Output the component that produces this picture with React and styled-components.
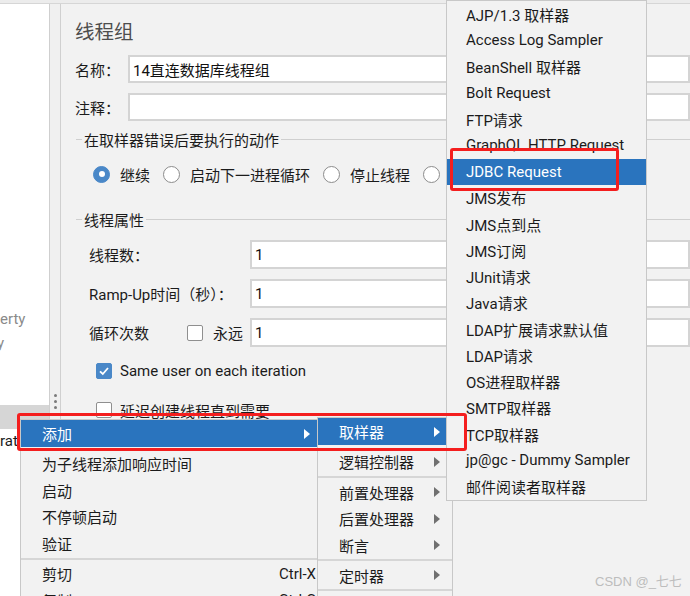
import React from "react";
import styled, { createGlobalStyle } from "styled-components";

const GlobalStyle = createGlobalStyle`
  html, body {
    margin: 0;
    padding: 0;
    background: #f2f2f2;
  }
  body {
    font-family: Roboto, "Noto Sans CJK SC", sans-serif;
    font-size: 15px;
    color: #1b1b1b;
  }
`

const Screen = styled.div`
  position: relative;
  width: 690px;
  height: 596px;
  overflow: hidden;
  background: #f2f2f2;
  display: flex;
  flex-direction: column;
`

const TopStrip = styled.div`
  flex: none;
  height: 3px;
  background: #ececec;
  border-bottom: 1px solid #d6d6d6;
`

const Body = styled.div`
  flex: 1;
  display: flex;
  min-height: 0;
`

const Tree = styled.div`
  flex: none;
  width: 49px;
  background: #fff;
  border-right: 1px solid #cfcfcf;
  padding-top: 302.75px;
`

const TreeRow = styled.div`
  height: 24.5px;
  line-height: 24.5px;
  white-space: nowrap;
  overflow: hidden;
  color: ${p => (p.$muted ? "#8a8a8a" : "#1b1b1b")};
  background: ${p => (p.$selected ? "#d6d6d6" : "transparent")};
  text-indent: ${p => p.$shift || 0}px;
`

const Splitter = styled.div`
  flex: none;
  width: 10px;
  background: #f0f0f0;
  border-right: 1px solid #d0d0d0;
  display: flex;
  flex-direction: column;
  align-items: center;
  gap: 3px;
  padding-top: 390px;
`

const Dot = styled.span`
  width: 3px;
  height: 3px;
  border-radius: 50%;
  background: #7a7a7a;
`

const Main = styled.div`
  flex: 1;
  min-width: 0;
  padding: 17px 0 0 14px;
`

const Title = styled.div`
  height: 24px;
  line-height: 24px;
  font-size: 19.5px;
  color: #4d4d4d;
`

const FieldRow = styled.div`
  display: flex;
  align-items: center;
  height: 28px;
  margin-top: 10px;
`

const FieldLabel = styled.span`
  flex: none;
  width: 53px;
`

const TextBox = styled.input`
  flex: 1;
  min-width: 0;
  height: ${p => p.$h || 28}px;
  box-sizing: border-box;
  border: 2px solid #d4d4d4;
  background: #fff;
  padding: 0 0 0 3px;
  font: inherit;
  color: #111;
  outline: none;
`

const Legend = styled.div`
  display: flex;
  align-items: center;
  height: 20px;
  margin-top: ${p => p.$mt}px;
  padding-left: 1px;

  &::before {
    content: "";
    width: 6px;
    height: 1px;
    background: #cfcfcf;
  }
  &::after {
    content: "";
    flex: 1;
    height: 1px;
    background: #cfcfcf;
  }
  span {
    padding: 0 2px;
  }
`

const RadioRow = styled.div`
  display: flex;
  align-items: center;
  height: 20px;
  margin-top: 15px;
  padding-left: 18px;
  white-space: nowrap;
`

const Radio = styled.span`
  flex: none;
  width: 17px;
  height: 17px;
  box-sizing: border-box;
  border-radius: 50%;
  border: 1.5px solid ${p => (p.$on ? "#4a88c8" : "#8c8c8c")};
  background: ${p => (p.$on ? "#4a88c8" : "#fff")};
  margin-right: 10px;
  display: flex;
  align-items: center;
  justify-content: center;

  &::after {
    content: "";
    display: ${p => (p.$on ? "block" : "none")};
    width: 6px;
    height: 6px;
    border-radius: 50%;
    background: #fff;
  }
`

const RadioText = styled.span`
  margin-right: 13px;
`

const PropRow = styled.div`
  display: flex;
  align-items: center;
  height: 29px;
  margin-top: ${p => p.$mt}px;
  padding-left: 14px;
`

const PropLabel = styled.div`
  flex: none;
  width: 161px;
  display: flex;
  align-items: center;
  white-space: nowrap;
`

const LoopText = styled.span`
  width: 98px;
`

const CheckRow = styled.div`
  display: flex;
  align-items: center;
  height: 20px;
  margin-top: ${p => p.$mt}px;
  padding-left: 21px;
  white-space: nowrap;
`

const Box = styled.span`
  flex: none;
  width: 16px;
  height: 16px;
  box-sizing: border-box;
  border-radius: 2px;
  border: 1px solid ${p => (p.$on ? "#4a88c8" : "#8f8f8f")};
  background: ${p => (p.$on ? "#4a88c8" : "#fff")};
  margin-right: ${p => p.$mr ?? 8}px;
  display: flex;
  align-items: center;
  justify-content: center;
`

const Menu = styled.div`
  position: absolute;
  left: ${p => p.$left}px;
  top: ${p => p.$top}px;
  width: ${p => p.$width}px;
  background: #f2f2f2;
  border: 1px solid #c8c8c8;
  z-index: ${p => p.$z};
`

const Item = styled.div`
  display: flex;
  align-items: center;
  height: ${p => p.$h || 26.5}px;
  padding-left: ${p => p.$pad}px;
  white-space: nowrap;
  background: ${p => (p.$active ? "#2a74be" : "transparent")};
  color: ${p => (p.$active ? "#fff" : "#1b1b1b")};
  margin-bottom: ${p => p.$gap || 0}px;

  span:first-child {
    flex: 1;
  }
`

const Shortcut = styled.span`
  margin-right: 6px;
`

const Arrow = styled.span`
  width: 0;
  height: 0;
  margin-right: 12px;
  border-top: 5px solid transparent;
  border-bottom: 5px solid transparent;
  border-left: 6px solid ${p => (p.$light ? "#fff" : "#707070")};
`

const Separator = styled.div`
  height: 4px;
  display: flex;
  align-items: center;

  &::after {
    content: "";
    flex: 1;
    height: 2px;
    background: #d6d6d6;
  }
`

const Callout = styled.div`
  position: absolute;
  left: ${p => p.$left}px;
  top: ${p => p.$top}px;
  width: ${p => p.$width}px;
  height: ${p => p.$height}px;
  box-sizing: border-box;
  border: 3px solid #f41e1e;
  border-radius: 3px;
  z-index: 10;
`

const Watermark = styled.div`
  position: absolute;
  left: 595px;
  top: 571px;
  font-family: "Liberation Sans", "Noto Sans CJK SC", sans-serif;
  font-size: 13px;
  color: #bdbdbd;
  z-index: 11;
`

const Check = () => (
  <svg width="12" height="12" viewBox="0 0 12 12">
    <polyline points="2,6.3 4.8,9 10,3" fill="none" stroke="#fff" strokeWidth="1.8" />
  </svg>
)

const samplers = [
  "AJP/1.3 取样器",
  "Access Log Sampler",
  "BeanShell 取样器",
  "Bolt Request",
  "FTP请求",
  "GraphQL HTTP Request",
  "JDBC Request",
  "JMS发布",
  "JMS点到点",
  "JMS订阅",
  "JUnit请求",
  "Java请求",
  "LDAP扩展请求默认值",
  "LDAP请求",
  "OS进程取样器",
  "SMTP取样器",
  "TCP取样器",
  "jp@gc - Dummy Sampler",
  "邮件阅读者取样器",
]

export default function App() {
  return (
    <Screen>
      <GlobalStyle />
      <TopStrip />
      <Body>
        <Tree>
          <TreeRow $muted>erty</TreeRow>
          <TreeRow $muted $shift={-3}>y</TreeRow>
          <TreeRow />
          <TreeRow />
          <TreeRow $selected />
          <TreeRow>rat</TreeRow>
        </Tree>
        <Splitter>
          <Dot />
          <Dot />
          <Dot />
        </Splitter>
        <Main>
          <Title>线程组</Title>
          <FieldRow>
            <FieldLabel>名称：</FieldLabel>
            <TextBox readOnly value="14直连数据库线程组" />
          </FieldRow>
          <FieldRow>
            <FieldLabel>注释：</FieldLabel>
            <TextBox readOnly value="" />
          </FieldRow>

          <Legend $mt={8}><span>在取样器错误后要执行的动作</span></Legend>
          <RadioRow>
            <Radio $on />
            <RadioText>继续</RadioText>
            <Radio />
            <RadioText>启动下一进程循环</RadioText>
            <Radio />
            <RadioText>停止线程</RadioText>
            <Radio />
            <RadioText>停止测试</RadioText>
          </RadioRow>

          <Legend $mt={25}><span>线程属性</span></Legend>
          <PropRow $mt={11}>
            <PropLabel>线程数：</PropLabel>
            <TextBox $h={29} readOnly value="1" />
          </PropRow>
          <PropRow $mt={10}>
            <PropLabel>Ramp-Up时间（秒）：</PropLabel>
            <TextBox $h={29} readOnly value="1" />
          </PropRow>
          <PropRow $mt={10}>
            <PropLabel>
              <LoopText>循环次数</LoopText>
              <Box $mr={10} />
              永远
            </PropLabel>
            <TextBox $h={29} readOnly value="1" />
          </PropRow>
          <CheckRow $mt={14}>
            <Box $on><Check /></Box>
            Same user on each iteration
          </CheckRow>
          <CheckRow $mt={19}>
            <Box />
            延迟创建线程直到需要
          </CheckRow>
        </Main>
      </Body>

      <Menu $left={20} $top={419} $width={301} $z={3}>
        <Item $h={27} $pad={21} $active $gap={3}>
          <span>添加</span>
          <Arrow $light />
        </Item>
        <Item $h={27} $pad={21}><span>为子线程添加响应时间</span></Item>
        <Item $pad={21}><span>启动</span></Item>
        <Item $pad={21}><span>不停顿启动</span></Item>
        <Item $pad={21}><span>验证</span></Item>
        <Separator />
        <Item $pad={21}>
          <span>剪切</span>
          <Shortcut>Ctrl-X</Shortcut>
        </Item>
        <Item $pad={21}>
          <span>复制</span>
          <Shortcut>Ctrl-C</Shortcut>
        </Item>
      </Menu>

      <Menu $left={317} $top={417} $width={134} $z={4}>
        <Item $h={27} $pad={21} $active $gap={3}>
          <span>取样器</span>
          <Arrow $light />
        </Item>
        <Item $h={27} $pad={21}><span>逻辑控制器</span><Arrow /></Item>
        <Separator />
        <Item $pad={21}><span>前置处理器</span><Arrow /></Item>
        <Item $pad={21}><span>后置处理器</span><Arrow /></Item>
        <Item $h={26} $pad={21}><span>断言</span><Arrow /></Item>
        <Separator />
        <Item $h={26} $pad={21}><span>定时器</span><Arrow /></Item>
        <Separator />
        <Item $h={26} $pad={21}><span>配置元件</span><Arrow /></Item>
      </Menu>

      <Menu $left={446} $top={0} $width={199} $z={5}>
        {samplers.map(name => (
          <Item key={name} $h={26.25} $pad={19} $active={name === "JDBC Request"}>
            <span>{name}</span>
          </Item>
        ))}
      </Menu>

      <Callout $left={17} $top={413} $width={450} $height={38} />
      <Callout $left={450} $top={148} $width={169} $height={43} />
      <Watermark>CSDN @_七七</Watermark>
    </Screen>
  );
}
